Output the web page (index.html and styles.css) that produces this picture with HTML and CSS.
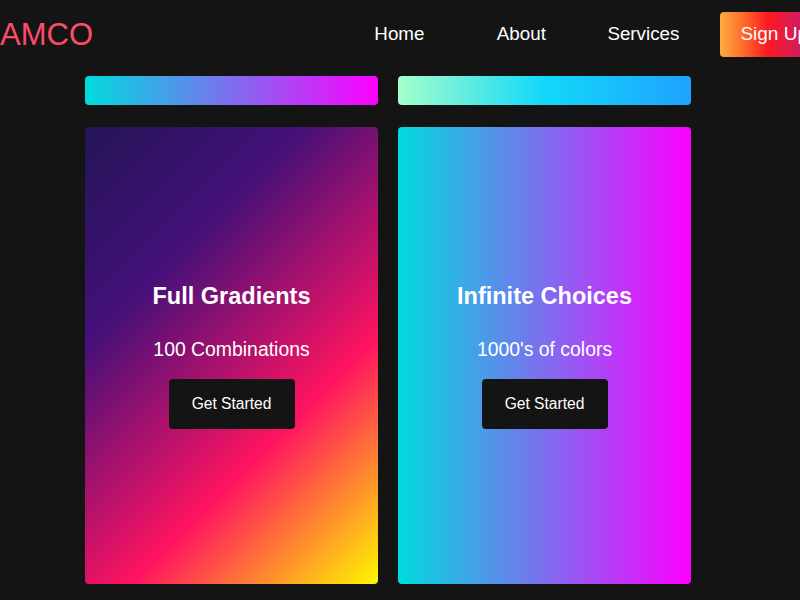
FILE: index.html
```html
<!DOCTYPE html>
<html lang="en">
<head>
<meta charset="utf-8">
<title>AMCO</title>
<link rel="stylesheet" href="styles.css">
</head>
<body>
<header class="site-header">
  <div class="logo">AMCO</div>
  <nav class="nav">
    <a class="nav-link" href="#">Home</a>
    <a class="nav-link" href="#">About</a>
    <a class="nav-link" href="#">Services</a>
    <a class="signup" href="#">Sign Up</a>
  </nav>
</header>
<main class="grid">
  <div class="strip strip-violet"></div>
  <div class="strip strip-aqua"></div>
  <section class="card card-sunset">
    <h2 class="card-title">Full Gradients</h2>
    <p class="card-text">100 Combinations</p>
    <a class="card-btn" href="#">Get Started</a>
  </section>
  <section class="card card-violet">
    <h2 class="card-title">Infinite Choices</h2>
    <p class="card-text">1000's of colors</p>
    <a class="card-btn" href="#">Get Started</a>
  </section>
</main>
</body>
</html>
```
FILE: styles.css
```css
html, body {
  margin: 0;
  padding: 0;
  background: #141414;
  overflow: hidden;
  height: 600px;
  font-family: "Liberation Sans", Arial, sans-serif;
  color: #fff;
}

.site-header {
  display: flex;
  align-items: center;
  height: 68px;
  width: 828px;
}

.logo {
  font-size: 31px;
  color: #fb4d68;
  line-height: 1;
}

.nav {
  display: flex;
  align-items: center;
  margin-left: auto;
}

.nav-link {
  width: 122px;
  text-align: center;
  color: #fff;
  text-decoration: none;
  font-size: 18.8px;
}

.signup {
  margin-left: 16px;
  height: 45px;
  display: flex;
  align-items: center;
  padding: 0 20px;
  border-radius: 4px;
  color: #fff;
  text-decoration: none;
  font-size: 19px;
  background: linear-gradient(to right, #fcac3e 0%, #ff6a2a 22%, #fd1a22 44%, #d41c5a 72%, #a8207c 100%);
}

.grid {
  display: grid;
  grid-template-columns: 293px 293px;
  grid-template-rows: 29px 457px;
  column-gap: 20px;
  row-gap: 22px;
  padding: 8px 0 0 85px;
}

.strip {
  border-radius: 4px;
}

.strip-violet {
  background: linear-gradient(to right, #00dbde, #fc00ff);
}

.strip-aqua {
  background: linear-gradient(to right, #a6ffcb, #12d8fa 50%, #1fa2ff);
}

.card {
  border-radius: 4px;
  display: flex;
  flex-direction: column;
  align-items: center;
  justify-content: center;
}

.card-sunset {
  background: linear-gradient(135deg, #231557 0%, #44107a 29%, #ff1361 67%, #fff800 100%);
}

.card-violet {
  background: linear-gradient(to right, #00dbde, #fc00ff);
}

.card-title {
  margin: 0;
  font-size: 23.5px;
  line-height: 28px;
  font-weight: bold;
}

.card-text {
  margin: 27px 0 18px;
  font-size: 19.4px;
  line-height: 24px;
}

.card-btn {
  display: flex;
  align-items: center;
  justify-content: center;
  width: 126px;
  height: 50px;
  background: #141414;
  border-radius: 4px;
  color: #fff;
  text-decoration: none;
  font-size: 15.6px;
}
```
